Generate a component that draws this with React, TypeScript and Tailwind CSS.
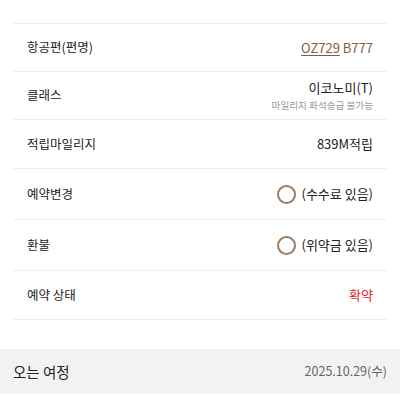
import React from 'react';

const font = { fontFamily: '"Noto Sans CJK KR", "Noto Sans", sans-serif' };

function Circle() {
  return <span className="inline-block w-[19px] h-[19px] rounded-full border-2 border-[#9c7b5f] mr-[5px]" />;
}

export default function App() {
  return (
    <div className="w-[400px] h-[400px] bg-white overflow-hidden text-[#222]" style={font}>
      <div className="h-[23px]" />

      <div className="mx-[13px] border-t border-[#eeeeee]">
        {/* 항공편 */}
        <div className="h-[48px] px-[14px] flex items-center justify-between border-b border-[#eeeeee]">
          <span className="text-[12.5px]">항공편(편명)</span>
          <span className="text-[13px] text-[#8a5a3a]">
            <span className="underline underline-offset-2">OZ729</span> B777
          </span>
        </div>

        {/* 클래스 */}
        <div className="h-[48px] px-[14px] flex items-center justify-between border-b border-[#eeeeee]">
          <span className="text-[12.5px]">클래스</span>
          <div className="flex flex-col items-end">
            <span className="text-[13px] leading-[18px]">이코노미(T)</span>
            <span className="text-[9.6px] leading-[14px] mt-[1px] text-[#999]">마일리지 좌석승급 불가능</span>
          </div>
        </div>

        {/* 적립마일리지 */}
        <div className="h-[49px] px-[14px] flex items-center justify-between border-b border-[#eeeeee]">
          <span className="text-[12.5px]">적립마일리지</span>
          <span className="text-[13px]">839M적립</span>
        </div>

        {/* 예약변경 */}
        <div className="h-[51px] px-[14px] flex items-center justify-between border-b border-[#eeeeee]">
          <span className="text-[12.5px]">예약변경</span>
          <span className="flex items-center text-[13px]">
            <Circle />(수수료 있음)
          </span>
        </div>

        {/* 환불 */}
        <div className="h-[51px] px-[14px] flex items-center justify-between border-b border-[#eeeeee]">
          <span className="text-[12.5px]">환불</span>
          <span className="flex items-center text-[13px]">
            <Circle />(위약금 있음)
          </span>
        </div>

        {/* 예약 상태 */}
        <div className="h-[49px] px-[14px] flex items-center justify-between border-b border-[#eeeeee]">
          <span className="text-[12.5px]">예약 상태</span>
          <span className="text-[13px] text-[#e3212d]">확약</span>
        </div>
      </div>

      <div className="h-[29px]" />

      {/* 오는 여정 */}
      <div className="h-[45px] bg-[#f2f2f2] px-[13px] flex items-center justify-between">
        <span className="text-[14.5px]">오는 여정</span>
        <span className="text-[12.5px] text-[#666]">2025.10.29(수)</span>
      </div>
    </div>
  );
}
